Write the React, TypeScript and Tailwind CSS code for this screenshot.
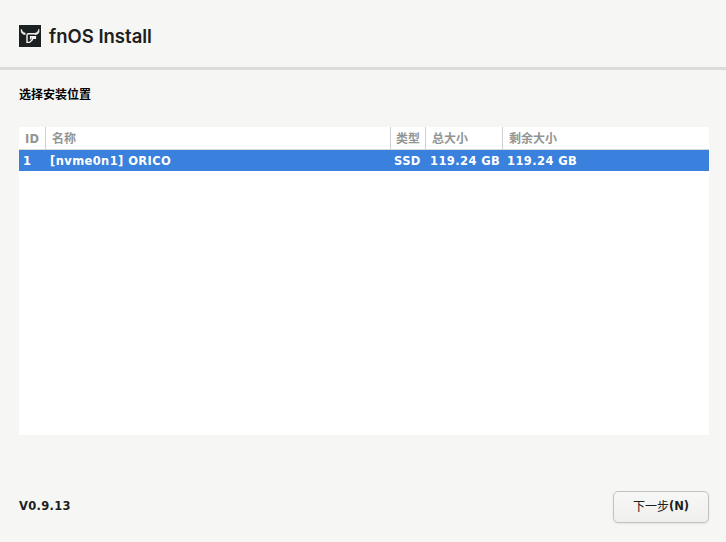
const columns = "grid grid-cols-[27px_345px_35px_77px_1fr]";

function Logo() {
  return (
    <svg width="22" height="22" viewBox="0 0 22 22" className="shrink-0">
      <rect width="22" height="22" fill="#1b2020" />
      <path d="M2.4 4C1.4 6.8 2.7 9.4 6.2 9.6V8C4.4 7.8 3.2 6.8 2.4 4Z" fill="#f4f4f2" stroke="#f4f4f2" strokeWidth="0.5" />
      <path d="M19.8 4C20.9 7.4 19.4 9.5 16 9.6V8.2C18 7.8 19.2 6.6 19.8 4Z" fill="#f4f4f2" stroke="#f4f4f2" strokeWidth="0.5" />
      <path d="M17 8.8H9.4Q8 8.8 8 10.2V17.4H10.6L13.4 14.8V13.2H16.4V11.8H11.6V14.4" fill="none" stroke="#f4f4f2" strokeWidth="1.4" />
    </svg>
  );
}

export default function App() {
  return (
    <div className="flex h-[542px] w-[726px] flex-col overflow-hidden bg-[#f6f6f4] text-[11.5px] font-bold whitespace-nowrap text-[#1c2020] [font-family:'DejaVu_Sans','Noto_Sans_CJK_SC',sans-serif]">
      <header className="flex h-[70px] shrink-0 items-start gap-2 border-b-[3px] border-[#dcdcda] pt-[25px] pl-[19px]">
        <Logo />
        <h1 className="text-[18.5px] leading-[23px] font-semibold text-[#1c2020] [font-family:Inter,sans-serif]">fnOS Install</h1>
      </header>
      <main className="flex flex-1 flex-col pr-[17px] pl-[19px]">
        <h2 className="mt-[16px] h-[18px] text-[12px] leading-[18px] font-bold text-black">选择安装位置</h2>
        <section className="mt-[23px] h-[308px] bg-white">
          <div className={`${columns} h-[23px] border-b border-[#d5d8d8] text-[12px] leading-[24px] text-[#929592]`}>
            <span className="h-[22px] border-r border-[#cfcfcd] pl-[6px] text-[11.5px] tracking-[0.3px]">ID</span>
            <span className="h-[22px] border-r border-[#cfcfcd] pl-[6px]">名称</span>
            <span className="h-[22px] border-r border-[#cfcfcd] pl-[5px]">类型</span>
            <span className="h-[22px] border-r border-[#cfcfcd] pl-[6px]">总大小</span>
            <span className="pl-[6px]">剩余大小</span>
          </div>
          <div className={`${columns} h-[21px] bg-[#3a80dd] leading-[22px] tracking-[0.4px] text-white`}>
            <span className="pl-[4px]">1</span>
            <span className="pl-[4px]">[nvme0n1] ORICO</span>
            <span className="pl-[3px]">SSD</span>
            <span className="pl-[4px]">119.24 GB</span>
            <span className="pl-[4px]">119.24 GB</span>
          </div>
        </section>
        <footer className="mt-[55px] flex h-[33px] items-center justify-between">
          <span className="pt-px tracking-[0.3px]">V0.9.13</span>
          <button className="flex h-[32px] w-[96px] items-center justify-center rounded-[5px] border border-[#c2c3c0] bg-linear-to-b from-[#f7f7f6] to-[#efefed] shadow-[0_1px_2px_rgba(0,0,0,0.08)]">
            <span className="text-[12px] font-normal">下一步</span>
            <span>(N)</span>
          </button>
        </footer>
      </main>
    </div>
  );
}
